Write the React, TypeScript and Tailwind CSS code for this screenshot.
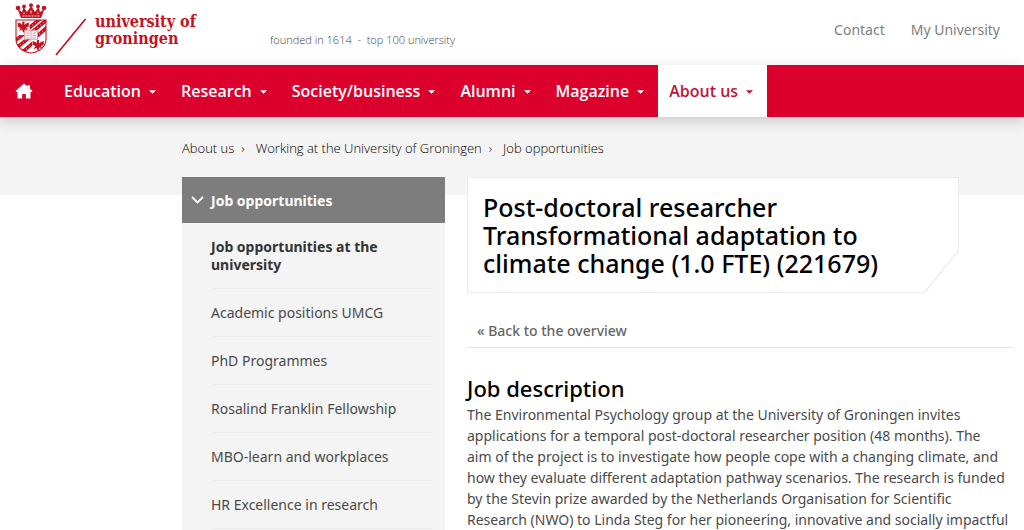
const navItems = [
  { label: 'Education', active: false },
  { label: 'Research', active: false },
  { label: 'Society/business', active: false },
  { label: 'Alumni', active: false },
  { label: 'Magazine', active: false },
  { label: 'About us', active: true },
];

const crumbs = ['About us', 'Working at the University of Groningen', 'Job opportunities'];

const sideItems = [
  'Academic positions UMCG',
  'PhD Programmes',
  'Rosalind Franklin Fellowship',
  'MBO-learn and workplaces',
  'HR Excellence in research',
];

function Crest() {
  return (
    <svg viewBox="0 0 34 51" className="h-[51px] w-[34px] shrink-0" aria-hidden="true">
      <defs>
        <clipPath id="shield">
          <path d="M2 17H32V36C32 44 25 49 17 50C9 49 2 44 2 36Z" />
        </clipPath>
      </defs>
      <g fill="#c4121f">
        <path d="M7 15L3.500 6L8 9L9.500 4L13 9L17 3L21 9L24.500 4L26 9L30.500 6L27 15Z" />
        <circle cx="4" cy="5" r="2.300" />
        <circle cx="10" cy="3.500" r="1.900" />
        <circle cx="17" cy="2.200" r="2" />
        <circle cx="24" cy="3.500" r="1.900" />
        <circle cx="30" cy="5" r="2.300" />
      </g>
      <path d="M8.500 13H25.500" stroke="#fff" strokeWidth="0.900" strokeDasharray="2 1" />
      <path d="M10 9.500V11M17 7.500V10.500M24 9.500V11" stroke="#fff" strokeWidth="0.900" />
      <path d="M2 17H32V36C32 44 25 49 17 50C9 49 2 44 2 36Z" fill="#fff" />
      <g clipPath="url(#shield)">
        <g stroke="#c4121f" strokeWidth="3.600">
          <path d="M15 25L27 15M17 30L36 14M22 34L38 20" />
          <path d="M-2 40L11 30M0 47L17 33M6 51L19 40" />
        </g>
        <g stroke="#fff" strokeWidth="0.700" strokeDasharray="1 3">
          <path d="M15 25L27 15M17 30L36 14M22 34L38 20M-2 40L11 30M0 47L17 33M6 51L19 40" />
        </g>
        <path d="M2 17H15.500V32H2ZM18.500 35H32V51H18.500Z" fill="#fff" />
        <g fill="#c4121f">
          <path d="M3.500 19.500L7 20.500L8 22L8.500 18.500H10.500L10.500 22L12 20.500L15 19.500L14.500 24L12 24.500L14 27L11 26.500L9.500 30L8 26.500L5 28L6.500 25L4 24Z" />
          <path d="M18.500 38L21.500 39L22.500 40.500L23 37H25L25 40.500L27 39L30 38L29.500 42L27 43L28 45L25.500 44.500L24 48L22.500 45L19.500 46L21.500 43L19 42Z" />
        </g>
        <path d="M10.500 28Q14 26 17 28Q20 26 23.500 28V37Q20 35 17 37Q14 35 10.500 37Z" fill="#fbeff0" stroke="#dc8c94" strokeWidth="0.800" />
        <path d="M17 28V37M12 30H15.500M12 32.500H15.500M12 35H15.500M18.500 30H22M18.500 32.500H22M18.500 35H22" stroke="#cf9ab8" strokeWidth="0.800" />
      </g>
      <path d="M2 17H32V36C32 44 25 49 17 50C9 49 2 44 2 36Z" fill="none" stroke="#c4121f" strokeWidth="1.100" />
    </svg>
  );
}

function Caret() {
  return (
    <svg viewBox="0 0 8 4" className="mt-[2px] h-1 w-[7px]" fill="currentColor" aria-hidden="true">
      <path d="M0 0H8L4 4Z" />
    </svg>
  );
}

export default function App() {
  return (
    <div className="bg-white font-['Noto_Sans',sans-serif] text-[#4a4a4a]">
      <header className="flex h-[65px] items-start justify-between pr-6 pl-[14px]">
        <div className="flex items-start">
          <a href="#" className="flex items-start pt-[3px] text-[#c4121f]">
            <Crest />
            <svg viewBox="0 0 32 38" className="mt-[15px] ml-[7px] h-[38px] w-8" aria-hidden="true">
              <path d="M1 37L30.500 1" stroke="#c4121f" strokeWidth="1.700" />
            </svg>
            <span className="mt-[10px] ml-2 w-[110px] font-['DejaVu_Serif_Condensed','DejaVu_Serif',serif] text-[16px] leading-[17px] font-bold whitespace-nowrap">
              university of
              <br />
              groningen
            </span>
          </a>
          <p className="mt-8 ml-[65px] font-['Open_Sans',sans-serif] text-[11px] leading-4 font-light whitespace-nowrap text-[#444]">
            founded in 1614 &nbsp;-&nbsp; top 100 university
          </p>
        </div>
        <div className="flex gap-[26px] pt-5 text-[14px] leading-5 text-[#808080]">
          <a href="#">Contact</a>
          <a href="#">My University</a>
        </div>
      </header>

      <nav aria-label="Main" className="relative flex h-[52px] items-stretch bg-[#dc002d] font-['Open_Sans',sans-serif] shadow-[0_4px_14px_rgba(0,0,0,0.18)]">
        <a href="#" aria-label="Home" className="flex w-[53px] items-center pl-[15px] text-white">
          <svg viewBox="0 0 18 16" className="h-4 w-[18px]" fill="currentColor" aria-hidden="true">
            <path d="M9 0.500L12.500 3.500V2H15V5.700L17.500 8L16.600 9H15.500V15.500H10.800V11H7.200V15.500H2.500V9H1.400L0.500 8Z" />
          </svg>
        </a>
        {navItems.map((item) => (
          <a
            key={item.label}
            href="#"
            className={`flex items-center gap-2 pr-[14px] pl-[11px] text-[16px] font-semibold whitespace-nowrap ${
              item.active ? 'bg-white text-[#c0143c]' : 'text-white'
            }`}
          >
            {item.label}
            <Caret />
          </a>
        ))}
      </nav>

      <div className="bg-[linear-gradient(#f4f4f4_78px,#fff_78px)] pr-[11px] pl-[182px]">
        <nav
          aria-label="Breadcrumb"
          className="flex h-[60px] items-center pt-[2px] font-['Open_Sans',sans-serif] text-[13px] leading-5 font-light whitespace-nowrap text-black"
        >
          {crumbs.map((crumb, i) => (
            <span key={crumb} className="flex">
              {i > 0 && <span className="mr-[11px] ml-[7px]">›</span>}
              <a href="#">{crumb}</a>
            </span>
          ))}
        </nav>

        <div className="flex h-[353px] items-stretch gap-[22px] overflow-hidden">
          <aside className="w-[263px] shrink-0 bg-[#f4f4f4]">
            <a href="#" className="flex h-[46px] items-center gap-[7px] bg-[#7d7d7d] pl-[9px] text-[14px] font-bold text-white">
              <svg viewBox="0 0 13 8" className="h-2 w-[13px]" fill="none" stroke="currentColor" strokeWidth="1.800" aria-hidden="true">
                <path d="M1 1L6.500 6.500L12 1" />
              </svg>
              Job opportunities
            </a>
            <ul className="pr-[13px] pl-[29px] text-[14px] leading-[18px]">
              <li className="border-b border-[#ededed] pt-[15px] pb-[14px] font-bold text-[#333]">
                <a href="#">
                  Job opportunities at the
                  <br />
                  university
                </a>
              </li>
              {sideItems.map((item) => (
                <li key={item} className="border-b border-[#ededed] pt-[15px] pb-[14px]">
                  <a href="#">{item}</a>
                </li>
              ))}
            </ul>
          </aside>

          <main className="min-w-0 flex-1">
            <div className="mr-[54px] bg-[#ececec] p-px [clip-path:polygon(0_0,100%_0,100%_calc(100%-42px),calc(100%-34px)_100%,0_100%)]">
              <h1 className="bg-white px-[15px] py-[15px] text-[25px] leading-7 font-medium text-black [clip-path:polygon(0_0,100%_0,100%_calc(100%-42px),calc(100%-34px)_100%,0_100%)]">
                Post-doctoral researcher
                <br />
                Transformational adaptation to
                <br />
                climate change (1.0 FTE) (221679)
              </h1>
            </div>
            <div className="mt-7 border-b border-[#e4e4e4] pb-[6px] pl-[10px] text-[14px] leading-5 font-medium text-[#666]">
              <a href="#">« Back to the overview</a>
            </div>
            <h2 className="mt-[26px] text-[22px] leading-7 font-medium text-black">Job description</h2>
            <p className="mt-[2px] text-[14px] leading-[21px] whitespace-nowrap">
              The Environmental Psychology group at the University of Groningen invites
              <br />
              applications for a temporal post-doctoral researcher position (48 months). The
              <br />
              aim of the project is to investigate how people cope with a changing climate, and
              <br />
              how they evaluate different adaptation pathway scenarios. The research is funded
              <br />
              by the Stevin prize awarded by the Netherlands Organisation for Scientific
              <br />
              Research (NWO) to Linda Steg for her pioneering, innovative and socially impactful
            </p>
          </main>
        </div>
      </div>
    </div>
  );
}
